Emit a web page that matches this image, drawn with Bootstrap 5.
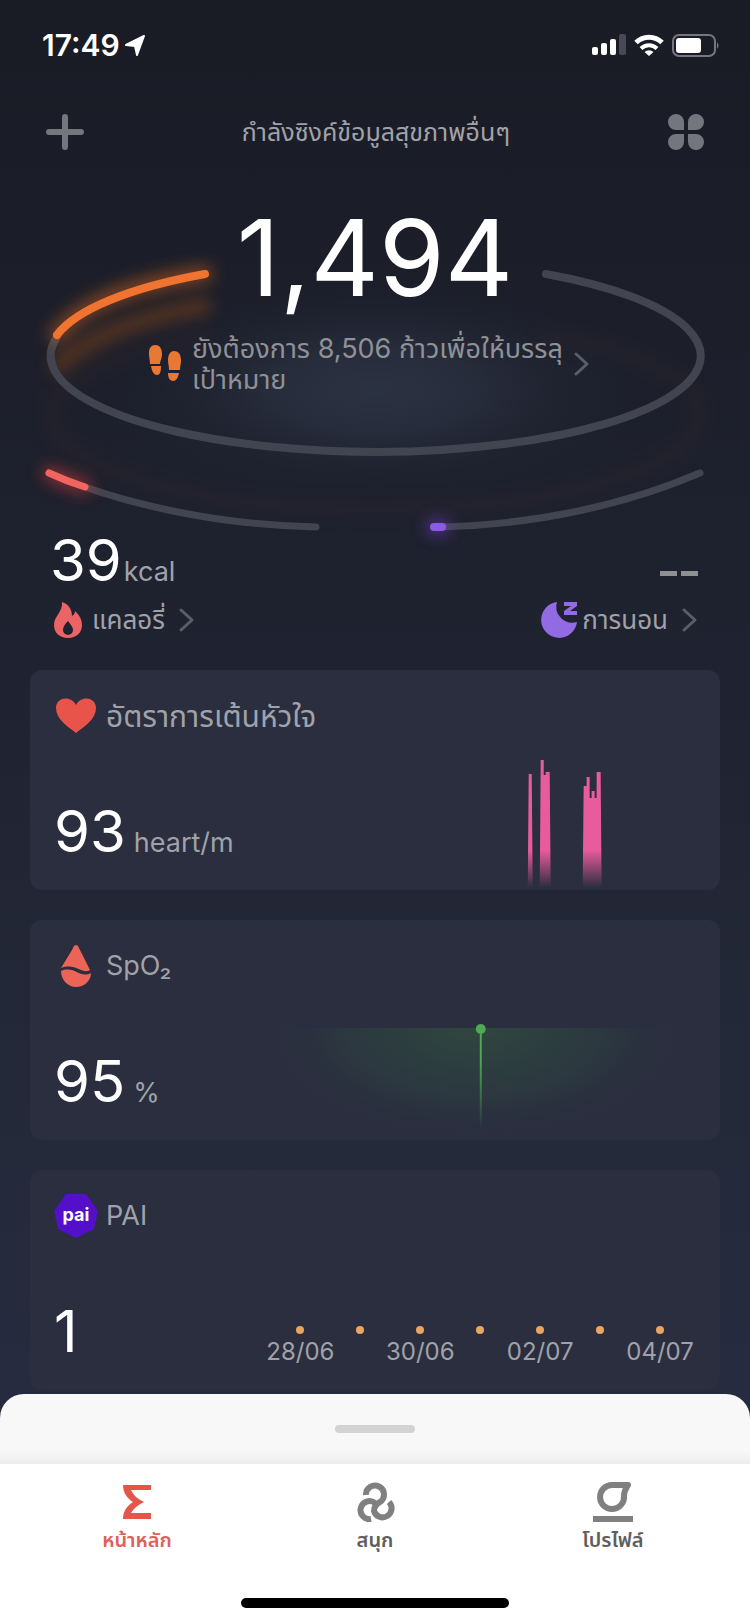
<!DOCTYPE html>
<html lang="th">
<head>
<meta charset="utf-8">
<meta name="viewport" content="width=device-width, initial-scale=1">
<title>สุขภาพ</title>
<link href="https://cdn.jsdelivr.net/npm/bootstrap@5.3.0/dist/css/bootstrap.min.css" rel="stylesheet">
<style>
  body { font-family: Inter, "Noto Sans Thai", "Noto Sans", "Liberation Sans", sans-serif; color: #fff;
    background: linear-gradient(#191b25 0, #1e212e 550px, #242a3a 1150px, #262b3f 1400px); }
  svg { display: block; flex: none; }
  a, a:hover { color: inherit; text-decoration: none; }
  .statusbar { height: 90px; padding: 0 30px 0 42px; }
  .clock { font-size: 30px; font-weight: 600; line-height: 36px; }
  .topbar { height: 84px; padding: 0 45px; }
  .icon-btn { border: 0; padding: 0; background: none; color: #74767e; }
  .muted { color: #a0a2aa; }
  .sync { font-size: 25px; line-height: 36px; }
  .hero { display: grid; }
  .hero > * { grid-area: 1 / 1; min-width: 0; }
  .hero > svg { width: 100%; height: auto; }
  .hero-text { padding-top: 24px; }
  .steps { font-size: 106px; line-height: 120px; }
  .goal { font-size: 27px; line-height: 31px; color: #8f9197; margin-top: 15px; }
  .goal-copy { width: 376px; }
  .figures { padding: 0 48px 0 50px; margin-top: -28px; }
  .big { font-size: 58px; line-height: 60px; }
  .unit { font-size: 27px; line-height: 36px; }
  .energy { gap: 2px; }
  .label-row { font-size: 26px; line-height: 40px; margin-top: 10px; }
  .dashes { width: 38px; height: 5px; margin-bottom: 14px; background: linear-gradient(90deg, #8f9092 17px, transparent 17px 21px, #8f9092 21px); }
  .cards { padding: 0 30px; gap: 30px; margin-top: 30px; }
  .tile { background: #2a2e3e; border-radius: 12px; min-height: 220px; padding-left: 24px; overflow: hidden; }
  .tile-title { font-size: 27px; line-height: 44px; padding-top: 24px; gap: 8px; }
  .tile-title .thai { font-size: 30px; }
  .value { padding-bottom: 29px; gap: 8px; }
  .chart { width: 69%; height: auto; }
  .days { display: grid; grid-template-columns: repeat(7, minmax(0, 1fr)); width: 63%; margin-right: 30px; padding-bottom: 18px; }
  .day { display: flex; flex-direction: column; align-items: center; height: 46px; white-space: nowrap; font-size: 24px; line-height: 36px; }
  .dot { width: 8px; height: 8px; border-radius: 4px; background: #eba562; flex: none; }
  .sheet { height: 70px; margin-top: 4px; border-radius: 24px 24px 0 0; background: linear-gradient(#f8f8f8 56px, #ededed); }
  .grip { width: 80px; height: 8px; border-radius: 4px; background: #d3d3d3; border: 0; padding: 0; }
  .tabs { background: #fff; padding: 18px 18px 0; height: 134px; }
  .tabs a { font-size: 20px; line-height: 30px; color: #5e5e5e; font-weight: 600; gap: 3px; }
  .tabs a.active { color: #e0605b; }
  .homebar-wrap { height: 26px; background: #fff; }
  .homebar { width: 268px; height: 10px; border-radius: 5px; background: #000; }
</style>
</head>
<body>
<div class="min-vh-100 d-flex flex-column">
  <div class="statusbar d-flex align-items-center justify-content-between">
    <div class="d-flex align-items-center gap-1">
      <span class="clock">17:49</span>
      <svg width="22" height="21" viewBox="0 0 20 21"><path d="M19 1 12 20 10 11 1 10Z" fill="#fff" stroke="#fff" stroke-width="2" stroke-linejoin="round"/></svg>
    </div>
    <div class="d-flex align-items-center gap-2">
      <svg width="34" height="22" viewBox="0 0 34 22" fill="#fff"><rect y="13" width="6" height="8" rx="2"/><rect x="9" y="9" width="6" height="12" rx="2"/><rect x="18" y="5" width="6" height="16" rx="2"/><rect x="27" width="7" height="21" rx="2" fill="#474954"/></svg>
      <svg width="30" height="22" viewBox="0 0 30 22" fill="none" stroke="#fff" stroke-width="5"><path d="M2 8.500a18.500 18.500 0 0 1 26 0" /><path d="M7 14.500a11.500 11.500 0 0 1 16 0" stroke-width="4"/><path d="M10.500 18a6.500 6.500 0 0 1 9 0L15 22Z" fill="#fff" stroke="none"/></svg>
      <svg width="48" height="23" viewBox="0 0 48 23"><rect x="1" y="1" width="42" height="21" rx="6" fill="none" stroke="#747681" stroke-width="2"/><rect x="4" y="4" width="25" height="15" rx="3" fill="#fff"/><path d="M45 8q3 3.500 0 7Z" fill="#747681"/></svg>
    </div>
  </div>

  <header class="topbar d-flex align-items-center justify-content-between">
    <button class="icon-btn" aria-label="เพิ่ม"><svg width="40" height="38" viewBox="0 0 40 38" stroke="currentColor" stroke-width="6" stroke-linecap="round"><path d="M20 4v30M4 19h32"/></svg></button>
    <span class="sync muted">กำลังซิงค์ข้อมูลสุขภาพอื่นๆ</span>
    <button class="icon-btn" aria-label="เมนู"><svg width="38" height="38" viewBox="0 0 38 38" fill="currentColor"><path d="M17 17H9A8 8 0 1 1 17 9ZM21 17V9A8 8 0 1 1 29 17ZM17 21v8A8 8 0 1 1 9 21ZM21 21h8A8 8 0 1 1 21 29Z"/></svg></button>
  </header>

  <main>
    <section class="hero">
      <svg viewBox="0 174 750 384" fill="none" stroke-linecap="round">
        <defs>
          <radialGradient id="haze"><stop offset="0" stop-color="#2b3242"/><stop offset=".4" stop-color="#282e3d" stop-opacity=".85"/><stop offset="1" stop-color="#1e212e" stop-opacity="0"/></radialGradient>
          <filter id="glow" filterUnits="userSpaceOnUse" x="0" y="174" width="750" height="400"><feGaussianBlur stdDeviation="8"/></filter>
        </defs>
        <ellipse cx="375" cy="390" rx="270" ry="110" fill="url(#haze)"/>
        <path d="M546 300A325 95 0 1 1 204 300" transform="translate(0 34)" stroke="#5a3032" stroke-width="16" opacity=".12" filter="url(#glow)"/>
        <path d="M204 306Q100 325 58 366" stroke="#a85216" stroke-width="16" opacity=".42" filter="url(#glow)"/>
        <path d="M546 274A325 96 0 1 1 57 337" stroke="#42444f" stroke-width="8"/>
        <path d="M57 335Q92 290 205 274" stroke="#e86a1c" stroke-width="16" opacity=".5" filter="url(#glow)"/>
        <path d="M57 335A325 96 0 0 1 205 274" stroke="#f07330" stroke-width="8"/>
        <path d="M49 473C118 503 215 525 316 527M700 473C630 503 539 525 438 527" stroke="#42444f" stroke-width="7"/>
        <path d="M49 473Q66 481 85 487" stroke="#e8403c" stroke-width="13" opacity=".6" filter="url(#glow)"/>
        <path d="M49 473Q66 481 85 487" stroke="#f2645f" stroke-width="7"/>
        <path d="M433 527h10" stroke="#7a45e0" stroke-width="14" opacity=".6" filter="url(#glow)"/>
        <path d="M434 527h8" stroke="#8c5be6" stroke-width="8"/>
      </svg>
      <div class="hero-text d-flex flex-column align-items-center">
        <div class="steps">1,494</div>
        <a href="#" class="goal d-flex align-items-center pe-2">
          <svg class="me-2" width="36" height="40" viewBox="0 0 36 40" fill="#e87833"><path d="M7.500 1C12 1 14 5 14 10c0 5-2 7-2 10H2C2 16 1 14 1 9 1 4 3 1 7.500 1ZM3 22h10c0 6-1 9-4 9s-5-3-6-9ZM26 7c5 0 7 4 7 9 0 5-1 6-1 10H21c0-4-1-6-1-10 0-5 2-9 6-9ZM20 29h11c-1 5-3 8-6 8s-5-3-5-8Z"/></svg>
          <span class="goal-copy">ยังต้องการ 8,506 ก้าวเพื่อให้บรรลุเป้าหมาย</span>
          <svg width="26" height="26" viewBox="0 0 26 26" fill="none" stroke="#5b5e68" stroke-width="3" stroke-linecap="round" stroke-linejoin="round"><path d="M8 3l11 10-11 10"/></svg>
        </a>
      </div>
    </section>

    <section class="figures d-flex justify-content-between">
      <a href="#" class="d-flex flex-column align-items-start">
        <span class="energy d-flex align-items-baseline"><span class="big">39</span><span class="unit muted">kcal</span></span>
        <span class="label-row muted d-flex align-items-center gap-2">
          <svg width="34" height="38" viewBox="0 0 34 38"><path d="M12 1c7 2 10 8 10 14 2-1 3-3 3-5 4 4 7 8 7 14 0 8-6 13-14 13S4 32 4 24C4 15 13 11 12 1Z" fill="#ec6366"/><path d="M18 20c3 4 5 6 5 9a5 5 0 0 1-10 0c0-3 2-6 5-9Z" fill="#1e212e"/></svg>
          <span>แคลอรี่</span>
          <svg width="26" height="26" viewBox="0 0 26 26" fill="none" stroke="#5b5e68" stroke-width="3" stroke-linecap="round" stroke-linejoin="round"><path d="M8 3l11 10-11 10"/></svg>
        </span>
      </a>
      <a href="#" class="d-flex flex-column align-items-end justify-content-end">
        <span class="dashes me-1"></span>
        <span class="label-row muted d-flex align-items-center gap-2">
          <span class="d-flex align-items-center gap-1">
            <svg width="38" height="38" viewBox="0 0 38 38" fill="#926ae3"><path d="M17 1A16 16 0 0 0 37 21 18 18 0 1 1 17 1Z"/><path d="M24 1h13v4l-7 5h7v4H24v-4l7-5h-7Z"/></svg>
            <span>การนอน</span>
          </span>
          <svg width="26" height="26" viewBox="0 0 26 26" fill="none" stroke="#5b5e68" stroke-width="3" stroke-linecap="round" stroke-linejoin="round"><path d="M8 3l11 10-11 10"/></svg>
        </span>
      </a>
    </section>

    <section class="cards d-flex flex-column">
      <article class="tile d-flex flex-column justify-content-between">
        <div class="tile-title muted d-flex align-items-center">
          <svg width="44" height="44" viewBox="0 0 44 44"><path d="M22 39C13 32 2 25 2 14 2 3 17 1 22 11 27 1 42 3 42 14 42 25 31 32 22 39Z" fill="#e85449"/></svg>
          <span class="thai">อัตราการเต้นหัวใจ</span>
        </div>
        <div class="d-flex justify-content-between align-items-end flex-grow-1">
          <div class="value d-flex align-items-baseline"><span class="big">93</span><span class="unit muted">heart/m</span></div>
          <svg class="chart" viewBox="0 0 460 140">
            <defs><linearGradient id="pulse" gradientUnits="userSpaceOnUse" x1="0" y1="20" x2="0" y2="138"><stop offset=".68" stop-color="#e85b9d"/><stop offset="1" stop-color="#e85b9d" stop-opacity="0"/></linearGradient></defs>
            <path fill="url(#pulse)" d="M268 138l1-114h3l1 114ZM280 138l1-128h3v15h2v-3h4l1 116ZM323 138l1-102h3v-9h3v21h2v-7h3v7h2v-26h4l1 116Z"/>
          </svg>
        </div>
      </article>

      <article class="tile d-flex flex-column justify-content-between">
        <div class="tile-title muted d-flex align-items-center">
          <svg width="44" height="44" viewBox="0 0 44 44" fill="#ec6357"><path d="M22 1c2 0 3 3 4 5l10 20c-8 5-14-8-29-2L18 6c1-2 2-5 4-5Z"/><path d="M7 27c14-6 18 8 30 2 0 8-7 14-15 14S7 36 7 27Z"/></svg>
          <span>SpO₂</span>
        </div>
        <div class="d-flex justify-content-between align-items-end flex-grow-1">
          <div class="value d-flex align-items-baseline"><span class="big">95</span><span class="unit muted">%</span></div>
          <svg class="chart" viewBox="0 0 460 140">
            <defs>
              <radialGradient id="oxygen"><stop offset="0" stop-color="#2f473d"/><stop offset=".6" stop-color="#2c3b40" stop-opacity=".8"/><stop offset="1" stop-color="#2a2e3e" stop-opacity="0"/></radialGradient>
              <linearGradient id="stem" x2="0" y2="1"><stop offset=".3" stop-color="#4ea854"/><stop offset="1" stop-color="#4ea854" stop-opacity="0"/></linearGradient>
              <clipPath id="lower"><path d="M0 28h460v112H0Z"/></clipPath>
            </defs>
            <ellipse cx="215" cy="28" rx="215" ry="112" fill="url(#oxygen)" clip-path="url(#lower)"/>
            <path d="M220 30h2v100h-2Z" fill="url(#stem)"/><circle cx="221" cy="29" r="5" fill="#4ea854"/>
          </svg>
        </div>
      </article>

      <article class="tile d-flex flex-column justify-content-between">
        <div class="tile-title muted d-flex align-items-center">
          <svg width="44" height="44" viewBox="0 0 44 44"><path d="M12 0h20l12 17-4 18-18 9-18-9L0 17Z" fill="#5410c8"/><text x="22" y="27" text-anchor="middle" font-family="Inter, sans-serif" font-size="18" font-weight="700" fill="#fff">pai</text></svg>
          <span>PAI</span>
        </div>
        <div class="d-flex justify-content-between align-items-end flex-grow-1">
          <div class="value d-flex align-items-baseline"><span class="big">1</span></div>
          <div class="days muted">
            <div class="day"><span class="dot"></span>28/06</div><div class="day"><span class="dot"></span></div>
            <div class="day"><span class="dot"></span>30/06</div><div class="day"><span class="dot"></span></div>
            <div class="day"><span class="dot"></span>02/07</div><div class="day"><span class="dot"></span></div>
            <div class="day"><span class="dot"></span>04/07</div>
          </div>
        </div>
      </article>
    </section>
  </main>

  <footer class="mt-auto">
    <div class="sheet d-flex align-items-center justify-content-center"><button class="grip" aria-label="เปิดแผง"></button></div>
    <nav class="tabs d-flex">
      <a href="#" class="active d-flex flex-column align-items-center col">
        <svg width="40" height="40" viewBox="0 0 40 40"><path d="M6 3h28v5H14c3 6 7 9 13 12-6 3-10 6-13 11h20v6H6c0-8 4-13 10-17C10 16 6 11 6 3Z" fill="#e65549"/></svg>หน้าหลัก</a>
      <a href="#" class="d-flex flex-column align-items-center col">
        <svg width="40" height="40" viewBox="0 0 40 40" fill="none" stroke="#808080" stroke-width="6"><path d="M11 13A9 9 0 1 1 25 20Q19 23 19 29A9 9 0 1 0 34 20"/><path d="M16 37A9 9 0 1 1 20 21"/></svg>สนุก</a>
      <a href="#" class="d-flex flex-column align-items-center col">
        <svg width="40" height="40" viewBox="0 0 40 40" fill="none" stroke="#808080" stroke-width="6"><path d="M19 3h16q-4 6-4 11A12 12 0 1 1 19 3Z" stroke-linejoin="round"/><path d="M0 37h40"/></svg>โปรไฟล์</a>
    </nav>
    <div class="homebar-wrap d-flex justify-content-center"><div class="homebar"></div></div>
  </footer>
</div>
<script src="https://cdn.jsdelivr.net/npm/bootstrap@5.3.0/dist/js/bootstrap.bundle.min.js"></script>
</body>
</html>
